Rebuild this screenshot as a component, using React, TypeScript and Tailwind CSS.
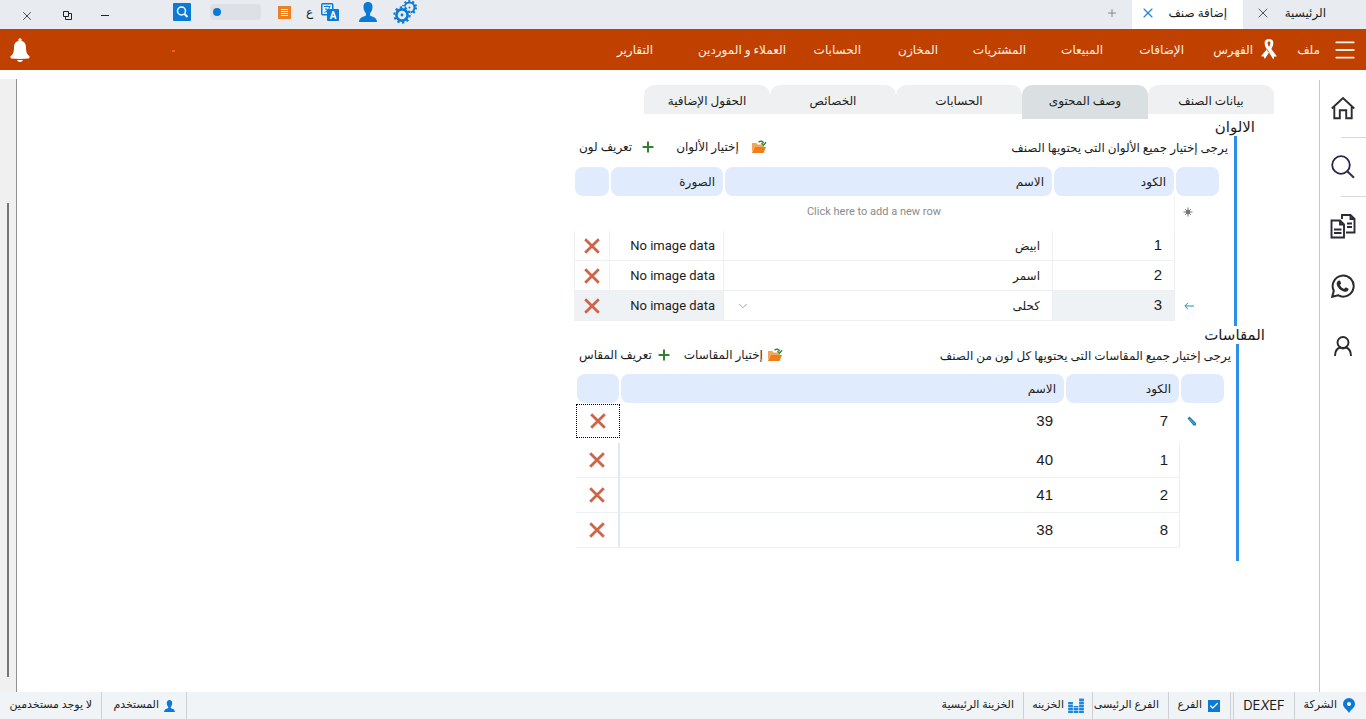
import { type ReactNode } from "react";
import { Check, ChevronDown, Menu, Plus, X } from "lucide-react";

const font = "font-['Roboto','DejaVu_Sans',sans-serif]";
const digits = "font-['Liberation_Sans',Arial,sans-serif]";

/* ---------- icons ---------- */

function UserIcon({ className }: { className: string }) {
  return (
    <svg viewBox="0 0 18 20" className={className} fill="#0a7ad6" aria-hidden="true">
      <path d="M9 0C5.800 0 4.300 2.200 4.500 5.300c.1 2.600 1 4.600 2.400 5.900v2.300C5.600 14.800 0 15 0 20h18c0-5-5.600-5.200-6.900-6.500v-2.300c1.400-1.300 2.300-3.300 2.400-5.900C13.700 2.200 12.200 0 9 0z" />
    </svg>
  );
}

function GearsIcon() {
  return (
    <svg viewBox="0 0 24 24" className="h-6 w-6" fill="none" stroke="#0a7ad6" aria-hidden="true">
      <circle cx="16.500" cy="7.500" r="5" strokeWidth="2" />
      <circle cx="16.500" cy="7.500" r="6.500" strokeWidth="2" strokeDasharray="2 2.080" />
      <circle cx="16.500" cy="7.500" r="1" fill="#0a7ad6" stroke="none" />
      <circle cx="9" cy="15" r="9" fill="#e8ecf1" stroke="none" />
      <circle cx="9" cy="15" r="5.600" strokeWidth="2.600" />
      <circle cx="9" cy="15" r="7.700" strokeWidth="2" strokeDasharray="2.400 2.440" />
      <circle cx="9" cy="15" r="1.400" fill="#0a7ad6" stroke="none" />
    </svg>
  );
}

function TranslateIcon() {
  return (
    <svg viewBox="0 0 18 18" className="h-[18px] w-[18px]" aria-hidden="true">
      <rect x="0.750" y="0.750" width="11" height="11" rx="1" fill="#e8f2fb" stroke="#0a7ad6" strokeWidth="1.500" />
      <path d="M3 3.500h6.500M6 2.500v1.500M8.500 4c-.5 2.500-2.500 4.500-5 5.500M4 6h2v3.500" fill="none" stroke="#0a7ad6" />
      <rect x="6" y="6" width="12" height="12" rx="1" fill="#0a7ad6" />
      <text x="12" y="15.500" textAnchor="middle" fontSize="10" fontWeight="700" fill="#fff">
        A
      </text>
    </svg>
  );
}

function NotesIcon() {
  return (
    <svg viewBox="0 0 13 13" className="h-[13px] w-[13px]" aria-hidden="true">
      <rect width="13" height="13" fill="#ee8022" />
      <path d="M3 3.500h7M3 5.500h7M3 7.500h7M3 9.500h7" stroke="#fff" />
    </svg>
  );
}

function SearchTileIcon() {
  return (
    <svg viewBox="0 0 18 18" className="h-[18px] w-[18px]" fill="none" aria-hidden="true">
      <rect width="18" height="18" rx="1" fill="#0a7ad6" />
      <circle cx="8.500" cy="8" r="4" stroke="#fff" strokeWidth="1.500" />
      <path d="M11.500 11l3 3" stroke="#fff" strokeWidth="2" />
    </svg>
  );
}

function RestoreIcon() {
  return (
    <svg viewBox="0 0 9 9" className="h-[9px] w-[9px]" fill="none" stroke="#222" aria-hidden="true">
      <path d="M.5.5h5v5h-5zM2.500 5.500v3h6v-6h-3" />
    </svg>
  );
}

function RibbonIcon() {
  return (
    <svg viewBox="0 0 16 21" className="h-[21px] w-4" fill="#fff" aria-hidden="true">
      <path
        fillRule="evenodd"
        d="M8 0c2.800 0 4.500 1.600 4.300 4.200-.1 2-1 4-2 5.800L16 17.500l-2.800-.1L12.400 20.500 8 13.500 3.800 20l-1-2.600L0 17.300 5.800 10.200c-1.200-1.800-2.100-3.800-2.200-6C3.500 1.600 5.200 0 8 0zM8 2.600c-1 0-1.500.7-1.400 1.700.1 1.200.6 2.300 1.400 3.500.8-1.200 1.300-2.300 1.400-3.500.1-1-.4-1.700-1.400-1.700z"
      />
      <path d="M5.800 10.200L8 13.500" stroke="#c04000" strokeWidth=".8" />
    </svg>
  );
}

function BellIcon() {
  return (
    <svg viewBox="0 0 20 24" className="h-6 w-5" fill="#fff" aria-hidden="true">
      <circle cx="10" cy="2" r="1.700" />
      <path d="M10 2.800c-4.200 0-6 3-6 6.500 0 5-1 7-3 8.500-1.200 1-.6 2.600 1 2.800 4.800.6 11.200.6 16 0 1.600-.2 2.200-1.800 1-2.800-2-1.500-3-3.500-3-8.500 0-3.500-1.800-6.500-6-6.500z" />
      <path d="M7 22h6c-.6 1.300-1.600 1.900-3 1.900S7.600 23.300 7 22z" />
    </svg>
  );
}

function HomeIcon() {
  return (
    <svg viewBox="0 0 24 24" className="h-6 w-6" fill="none" stroke="#2b2b33" strokeWidth="1.900" aria-hidden="true">
      <path d="M.8 12.500L12 2l11.200 10.500" />
      <path d="M3.300 11v11.200h5.500v-8h6.400v8h5.500V11" />
    </svg>
  );
}

function LensIcon() {
  return (
    <svg viewBox="0 0 24 24" className="h-6 w-6" fill="none" stroke="#25254a" strokeWidth="1.800" aria-hidden="true">
      <circle cx="10" cy="10" r="8.800" />
      <path d="M16.500 16.500l6.500 6.300" stroke="#333" strokeWidth="2" />
    </svg>
  );
}

function PapersIcon() {
  return (
    <svg viewBox="0 0 26 26" className="h-[26px] w-[26px]" fill="none" stroke="#2b2b33" strokeWidth="1.900" aria-hidden="true">
      <path d="M1.500 7.500h8.500l4 4v13H1.500zM10 7.500v4h4M4 16.500h7.500M4 20h7.500" />
      <path d="M12 6V2h8.500l4 4v13.500H16M20.500 2v4h4M17 10.500h5M17 14h5" />
    </svg>
  );
}

function WhatsAppIcon() {
  return (
    <svg viewBox="0 0 24 24" className="h-6 w-6" fill="none" stroke="#2b2b2b" strokeWidth="2" aria-hidden="true">
      <path d="M1.200 22.800l1.600-6A10.500 10.500 0 1 1 7 21.200z" />
      <path
        d="M8.400 6.500c.4 0 .6.200.8.600l.8 2c.1.400 0 .7-.3 1l-.8.900c.9 1.900 2.300 3.200 4.200 4l1-1.200c.3-.4.600-.4 1-.2l2 1c.5.200.5.500.4 1-.4 1.700-2.100 2.500-3.900 2.100-4.200-1-7.100-3.900-7.900-7.400-.3-1.700.9-3.800 2.700-3.800z"
        fill="#2b2b2b"
        stroke="none"
      />
    </svg>
  );
}

function PersonIcon() {
  return (
    <svg viewBox="0 0 18 20" className="h-5 w-[18px]" fill="none" stroke="#2b2b2b" strokeWidth="1.900" aria-hidden="true">
      <circle cx="9" cy="6.500" r="5.500" />
      <path d="M1 20c0-4.500 2-7.500 5-8.500 2 1.300 4 1.300 6 0 3 1 5 4 5 8.500" />
    </svg>
  );
}

function FolderIcon() {
  return (
    <svg viewBox="0 0 16 14" className="h-[14px] w-4" aria-hidden="true">
      <path d="M1 12V3h4.500l1 1.500H13V7H4z" fill="#f2a65a" />
      <path d="M3.800 7H15l-2.500 6H1z" fill="#ef7d1a" />
      <path d="M7.500 2.200C9.500.6 12 1 12.500 3.200M15 2.200L12.700 5 10.300 3.200" fill="none" stroke="#2f8a3c" strokeWidth="1.400" />
    </svg>
  );
}

function CrossIcon() {
  return (
    <svg viewBox="0 0 16 16" className="h-4 w-4" stroke="#cf6548" strokeWidth="2.800" aria-hidden="true">
      <path d="M1.200 1.200l13.600 13.600M14.800 1.200L1.200 14.800" />
    </svg>
  );
}

function PencilIcon() {
  return (
    <svg viewBox="0 0 10 10" className="h-[10px] w-[10px]" aria-hidden="true">
      <path d="M.5 2.500l2-2L9 7v2.500H6.500z" fill="#1c7fb8" />
      <path d="M2.500 3l5 5" stroke="#8cc8e8" strokeWidth=".8" />
    </svg>
  );
}

function NewRowIcon() {
  return (
    <svg viewBox="0 0 10 10" className="h-[10px] w-[10px]" stroke="#777" strokeWidth="1" aria-hidden="true">
      <path d="M5 .5v9M.5 5h9M2 2l6 6M8 2L2 8" />
      <circle cx="5" cy="5" r="2.200" fill="#777" stroke="none" />
    </svg>
  );
}

function ArrowIcon() {
  return (
    <svg viewBox="0 0 10 8" className="h-2 w-[10px]" fill="none" stroke="#2a8db5" aria-hidden="true">
      <path d="M10 4H1M4 .8L.8 4 4 7.200" />
    </svg>
  );
}

function PinIcon() {
  return (
    <svg viewBox="0 0 12 15" className="h-[15px] w-3" aria-hidden="true">
      <path d="M6 0a6 6 0 0 1 6 6c0 3.500-4 5.500-6 9-2-3.500-6-5.500-6-9a6 6 0 0 1 6-6z" fill="#0a7ad6" />
      <circle cx="6" cy="6" r="2" fill="#fff" />
    </svg>
  );
}

function CoinsIcon() {
  return (
    <svg viewBox="0 0 16 15" className="h-[15px] w-4" strokeWidth="4.600" aria-hidden="true">
      <path d="M2.500 15V4M8 15V8M13.500 15V0" stroke="#8cc4ee" />
      <path d="M2.500 15V4M8 15V8M13.500 15V0" stroke="#1b86da" strokeDasharray="2 1" />
    </svg>
  );
}

/* ---------- data ---------- */

const menu = [
  { label: "الإضافات", width: "w-[81px]" },
  { label: "المبيعات", width: "w-[77px]" },
  { label: "المشتريات", width: "w-[88px]" },
  { label: "المخازن", width: "w-[77px]" },
  { label: "الحسابات", width: "w-[75px]" },
  { label: "العملاء و الموردين", width: "w-[133px]" },
  { label: "التقارير", width: "w-[60px]" },
];

const tabs = ["بيانات الصنف", "وصف المحتوى", "الحسابات", "الخصائص", "الحقول الإضافية"];

const colors = [
  { code: 1, name: "ابيض" },
  { code: 2, name: "اسمر" },
  { code: 3, name: "كحلى" },
];

const sizes = [
  { code: 7, name: "39" },
  { code: 1, name: "40" },
  { code: 2, name: "41" },
  { code: 8, name: "38" },
];

/* ---------- parts ---------- */

function HeadCell({ children }: { children?: ReactNode }) {
  return (
    <th className="p-0 px-px text-start font-normal">
      <div className="flex h-[29px] items-center rounded-lg bg-[#e0ebfd] ps-2 text-xs">{children}</div>
    </th>
  );
}

function DeleteButton() {
  return (
    <button type="button" aria-label="حذف" className="flex w-full items-center justify-center">
      <CrossIcon />
    </button>
  );
}

type ToolbarProps = {
  note: string;
  pick: string;
  define: string;
  groupGap: string;
  pickGap: string;
  defineGap: string;
};

function Toolbar({ note, pick, define, groupGap, pickGap, defineGap }: ToolbarProps) {
  return (
    <div className="flex items-center justify-between text-xs whitespace-nowrap">
      <p>{note}</p>
      <div className={`flex items-center pb-[2px] ${groupGap}`}>
        <button type="button" className={`flex items-center ${pickGap}`}>
          <FolderIcon />
          {pick}
        </button>
        <button type="button" className={`flex items-center ${defineGap}`}>
          <Plus className="h-4 w-4" color="#2f8034" strokeWidth={3} />
          {define}
        </button>
      </div>
    </div>
  );
}

function TitleBar() {
  return (
    <header className="flex h-[29px] items-stretch bg-[#e8ecf1] text-xs">
      <div className="flex w-[123px] items-center justify-between ps-10 pe-3 pb-[3px]">
        <button type="button">الرئيسية</button>
        <button type="button" aria-label="إغلاق الرئيسية">
          <X className="h-4 w-4" color="#555" strokeWidth={1.5} />
        </button>
      </div>
      <div className="flex w-[111px] items-center justify-between bg-white ps-4 pe-2 pb-[3px]">
        <button type="button">إضافة صنف</button>
        <button type="button" aria-label="إغلاق إضافة صنف">
          <X className="h-4 w-4" color="#1b86da" strokeWidth={1.75} />
        </button>
      </div>
      <button type="button" aria-label="تبويب جديد" className="flex w-10 items-center justify-center pb-1">
        <Plus className="h-3 w-3" color="#888" strokeWidth={2} />
      </button>
      <div className="flex flex-1 items-center justify-end pb-[5px]">
        <button type="button" aria-label="الإعدادات" className="me-4">
          <GearsIcon />
        </button>
        <button type="button" aria-label="المستخدم" className="me-5">
          <UserIcon className="h-5 w-[18px]" />
        </button>
        <button type="button" className="me-[15px] flex items-center gap-2">
          <TranslateIcon />
          <span>ع</span>
        </button>
        <button type="button" aria-label="الملاحظات" className="me-[17px]">
          <NotesIcon />
        </button>
        <input
          type="range"
          aria-label="مستوى التكبير"
          dir="ltr"
          defaultValue={0}
          className="ml-[19px] h-4 w-[51px] appearance-none rounded bg-[#dde1e5] px-[3px] [&::-webkit-slider-thumb]:h-2 [&::-webkit-slider-thumb]:w-2 [&::-webkit-slider-thumb]:appearance-none [&::-webkit-slider-thumb]:rounded-full [&::-webkit-slider-thumb]:bg-[#0a7ad6]"
        />
        <button type="button" aria-label="بحث">
          <SearchTileIcon />
        </button>
      </div>
      <div className="flex w-[173px] items-center justify-between ps-16 pe-5 pt-[2px]">
        <button type="button" aria-label="تصغير" className="h-px w-2 bg-[#222]" />
        <button type="button" aria-label="استعادة">
          <RestoreIcon />
        </button>
        <button type="button" aria-label="إغلاق">
          <X className="h-[14px] w-[14px]" color="#333" strokeWidth={1.5} />
        </button>
      </div>
    </header>
  );
}

function MenuBar() {
  return (
    <nav className="flex h-[41px] items-center bg-[#c04000] ps-2 text-xs whitespace-nowrap text-[#fff1e6]">
      <button type="button" aria-label="القائمة" className="me-3">
        <Menu className="h-[26px] w-[26px]" strokeWidth={1.75} />
      </button>
      <button type="button" className="w-[43px] text-start">
        ملف
      </button>
      <button type="button" className="flex w-[93px] items-center gap-2">
        <RibbonIcon />
        الفهرس
      </button>
      {menu.map((item) => (
        <button key={item.label} type="button" className={`${item.width} text-start`}>
          {item.label}
        </button>
      ))}
      <div className="flex flex-1 justify-end pe-[10px]">
        <span className="me-[142px] mt-3 h-[2px] w-[3px] bg-[#ff5a1f]" />
        <button type="button" aria-label="التنبيهات">
          <BellIcon />
        </button>
      </div>
    </nav>
  );
}

function SideRail() {
  return (
    <aside className="mt-[10px] flex w-[47px] flex-col items-center border-e border-[#c4c6c8] pt-4">
      <button type="button" aria-label="الرئيسية">
        <HomeIcon />
      </button>
      <hr className="my-[17px] w-[25px] self-start border-[#d9d9d9]" />
      <button type="button" aria-label="بحث">
        <LensIcon />
      </button>
      <hr className="mt-[17px] mb-4 w-[25px] self-start border-[#d9d9d9]" />
      <button type="button" aria-label="المستندات">
        <PapersIcon />
      </button>
      <button type="button" aria-label="واتساب" className="mt-[35px]">
        <WhatsAppIcon />
      </button>
      <button type="button" aria-label="الحساب" className="mt-[38px]">
        <PersonIcon />
      </button>
    </aside>
  );
}

function ColorsTable() {
  return (
    <table className="w-full max-w-[646px] table-fixed border-separate border-spacing-0">
      <colgroup>
        <col className="w-[45px]" />
        <col className="w-[122px]" />
        <col />
        <col className="w-[114px]" />
        <col className="w-9" />
      </colgroup>
      <thead>
        <tr>
          <HeadCell />
          <HeadCell>الكود</HeadCell>
          <HeadCell>الاسم</HeadCell>
          <HeadCell>الصورة</HeadCell>
          <HeadCell />
        </tr>
      </thead>
      <tbody>
        <tr className="h-[35px]">
          <td className="p-0 ps-[27px] pb-[3px]">
            <NewRowIcon />
          </td>
          <td className="border-s border-[#f0f2f4] p-0" />
          <td colSpan={3} className="p-0 ps-[112px] pb-[2px]">
            <button type="button" dir="ltr" className="block text-[11px] text-[#8a8a8a]">
              Click here to add a new row
            </button>
          </td>
        </tr>
        {colors.map((row) => {
          const selected = row.code === 3;
          const tint = selected ? "bg-[#eff2f5]" : "";
          return (
            <tr key={row.code} className="h-[30px]">
              <td className="p-0 ps-[26px]">{selected && <ArrowIcon />}</td>
              <td className={`border-s border-b border-[#edeff2] p-0 ps-3 text-[15px] ${digits} ${tint}`}>{row.code}</td>
              <td className="border-s border-b border-[#edeff2] p-0 ps-3 text-xs">
                {selected ? (
                  <div className="grid items-center">
                    <select aria-label="الاسم" className="col-start-1 row-start-1 w-full appearance-none bg-transparent">
                      <option>{row.name}</option>
                    </select>
                    <ChevronDown
                      className="pointer-events-none col-start-1 row-start-1 me-3 h-[14px] w-[14px] justify-self-end"
                      color="#999"
                      strokeWidth={1.5}
                    />
                  </div>
                ) : (
                  row.name
                )}
              </td>
              <td className={`border-s border-b border-[#edeff2] p-0 ps-2 text-[13px] whitespace-nowrap ${tint}`}>
                <span dir="ltr">No image data</span>
              </td>
              <td className={`border-b border-[#edeff2] p-0 ${selected ? "" : "border-s border-e"} ${tint}`}>
                <DeleteButton />
              </td>
            </tr>
          );
        })}
      </tbody>
    </table>
  );
}

function SizesTable() {
  return (
    <table className="w-full max-w-[649px] table-fixed border-separate border-spacing-0">
      <colgroup>
        <col className="w-[45px]" />
        <col className="w-[115px]" />
        <col />
        <col className="w-[44px]" />
      </colgroup>
      <thead>
        <tr>
          <HeadCell />
          <HeadCell>الكود</HeadCell>
          <HeadCell>الاسم</HeadCell>
          <HeadCell />
        </tr>
      </thead>
      <tbody className={`text-[15px] ${digits}`}>
        {sizes.map((row, index) => {
          const first = index === 0;
          const line = first ? "border-transparent pb-[2px]" : "border-[#edf1f4]";
          return (
            <tr key={row.code} className={first ? "h-10" : "h-[35px]"}>
              <td className="p-0 ps-7 pb-1">{first && <PencilIcon />}</td>
              <td className={`border-s border-b p-0 ps-[11px] ${line}`}>{row.code}</td>
              <td className={`border-b p-0 ps-3 ${line}`}>{row.name}</td>
              <td
                className={`p-0 ${first ? "align-top" : "border-s-2 border-b border-s-[#dfe9f4] border-b-[#edf1f4]"}`}
              >
                {first ? (
                  <div className="mt-px flex h-[34px] items-center border border-dotted border-black">
                    <DeleteButton />
                  </div>
                ) : (
                  <DeleteButton />
                )}
              </td>
            </tr>
          );
        })}
      </tbody>
    </table>
  );
}

function Content() {
  return (
    <main className="min-w-0 flex-1 pt-[15px]">
      <div role="tablist" className="flex h-[34px] items-start ps-[45px] text-xs whitespace-nowrap">
        {tabs.map((tab, index) => (
          <button
            key={tab}
            type="button"
            role="tab"
            aria-selected={index === 1}
            className={
              index === 1
                ? "h-[34px] w-[126px] rounded-t-[10px] bg-[#dadfe1] pb-[2px]"
                : "h-[29px] w-[126px] rounded-t-[10px] bg-[#eef0f1] pt-[2px]"
            }
          >
            {tab}
          </button>
        ))}
      </div>

      <section>
        <h2 className="ps-16 text-[15px] leading-[17px]">الالوان</h2>
        <div className="flex ps-[82px]">
          <div className="w-[3px] shrink-0 bg-[#2e8fe6]" />
          <div className="w-full max-w-[661px] pb-[5px]">
            <div className="flex h-[31px] flex-col justify-center ps-[6px] pe-[6px] pb-2">
              <Toolbar
                note="يرجى إختيار جميع الألوان التى يحتويها الصنف"
                pick="إختيار الألوان"
                define="تعريف لون"
                groupGap="gap-5"
                pickGap="gap-3"
                defineGap="gap-2"
              />
            </div>
            <div className="ps-[14px]">
              <ColorsTable />
            </div>
          </div>
        </div>
      </section>

      <section>
        <h2 className="ps-[54px] text-[15px] leading-[18px]">المقاسات</h2>
        <div className="flex ps-[80px]">
          <div className="w-[3px] shrink-0 bg-[#2e8fe6]" />
          <div className="w-full max-w-[660px] pb-[13px]">
            <div className="flex h-[30px] flex-col justify-center ps-[5px] pe-[3px] pb-[6px]">
              <Toolbar
                note="يرجى إختيار جميع المقاسات التى يحتويها كل لون  من الصنف"
                pick="إختيار المقاسات"
                define="تعريف المقاس"
                groupGap="gap-3"
                pickGap="gap-1"
                defineGap="gap-1"
              />
            </div>
            <div className="ps-[11px]">
              <SizesTable />
            </div>
          </div>
        </div>
      </section>
    </main>
  );
}

function StatusBar() {
  const cell = "flex items-center border-e border-[#cdd1d6]";
  return (
    <footer className="flex h-[27px] items-stretch bg-[#f1f4f7] text-[11px] whitespace-nowrap">
      <div className={`${cell} w-[72px] gap-[6px] ps-[11px]`}>
        <PinIcon />
        الشركة
      </div>
      <div className={`${cell} w-[61px] justify-center font-['Inter',sans-serif] text-[13px]`}>
        <span dir="ltr">
          DE<span className="italic">X</span>EF
        </span>
      </div>
      <label className={`${cell} ms-[2px] w-[63px] gap-[6px] border-s ps-[10px]`}>
        <span className="grid items-center justify-items-center">
          <input
            type="checkbox"
            defaultChecked
            className="col-start-1 row-start-1 h-3 w-3 appearance-none bg-[#0a7ad6]"
          />
          <Check className="pointer-events-none col-start-1 row-start-1 h-[10px] w-[10px]" color="#fff" strokeWidth={3} />
        </span>
        الفرع
      </label>
      <div className={`${cell} w-[76px] ps-[9px]`}>الفرع الرئيسى</div>
      <div className={`${cell} w-[69px] gap-1 ps-2`}>
        <CoinsIcon />
        الخزينه
      </div>
      <div className="flex flex-1 items-center ps-[9px]">الخزينة الرئيسية</div>
      <div className="flex w-[187px] border-s border-[#cdd1d6]">
        <div className={`${cell} w-[85px] gap-1 ps-[10px]`}>
          <UserIcon className="h-3 w-[13px]" />
          المستخدم
        </div>
        <div className="flex items-center ps-[9px]">لا يوجد مستخدمين</div>
      </div>
    </footer>
  );
}

export default function App() {
  return (
    <div dir="rtl" className={`flex min-h-screen flex-col bg-white text-[#1c1c1c] ${font}`}>
      <TitleBar />
      <MenuBar />
      <div className="flex flex-1 items-stretch">
        <SideRail />
        <Content />
        <div className="mt-[9px] flex w-[17px] justify-center border-s border-[#8f9194] bg-[#f0f0f0] pt-[124px] pb-[15px]">
          <div className="w-[2px] bg-[#777]" />
        </div>
      </div>
      <StatusBar />
    </div>
  );
}
